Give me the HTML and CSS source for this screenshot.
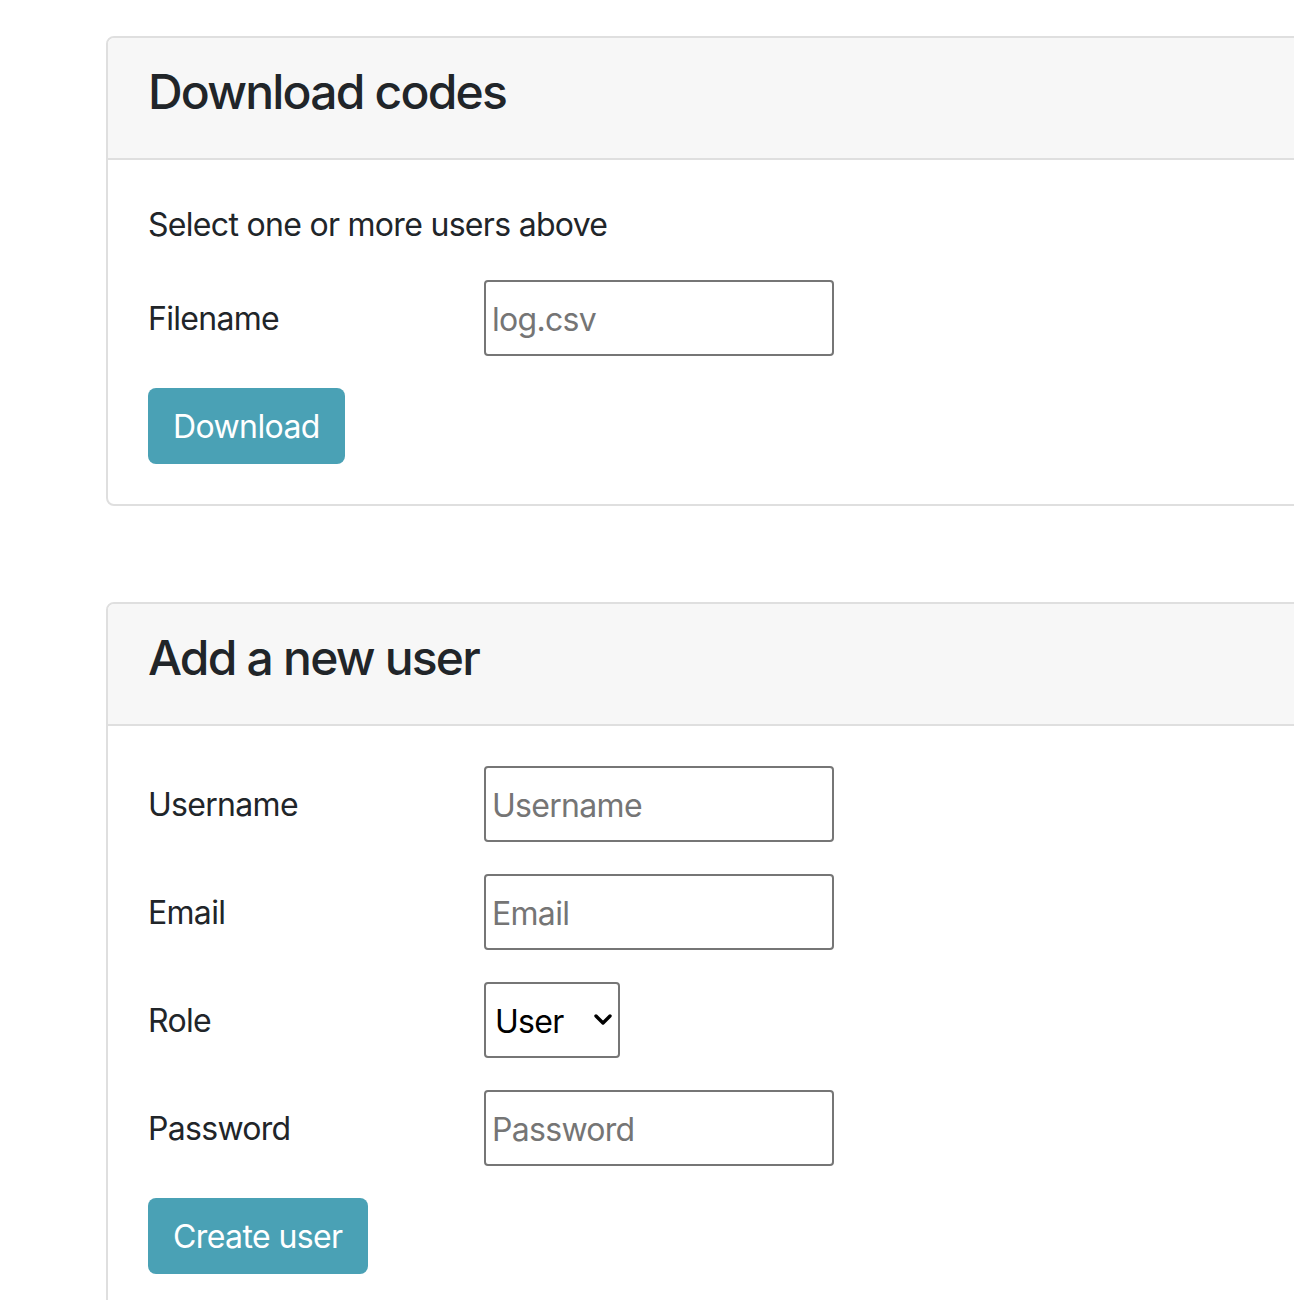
FILE: index.html
```html
<!DOCTYPE html>
<html lang="en">
<head>
<meta charset="utf-8">
<title>Users</title>
<link rel="stylesheet" href="styles.css">
</head>
<body>
<main class="page">
  <section class="card card-download">
    <header class="card-header"><h4 class="card-title">Download codes</h4></header>
    <div class="card-body">
      <p class="hint">Select one or more users above</p>
      <div class="form-row">
        <label class="form-label" for="filename">Filename</label>
        <input class="text-input" id="filename" type="text" placeholder="log.csv">
      </div>
      <button class="btn" type="button">Download</button>
    </div>
  </section>

  <section class="card">
    <header class="card-header"><h4 class="card-title">Add a new user</h4></header>
    <div class="card-body">
      <div class="form-row">
        <label class="form-label" for="username">Username</label>
        <input class="text-input" id="username" type="text" placeholder="Username">
      </div>
      <div class="form-row">
        <label class="form-label" for="email">Email</label>
        <input class="text-input" id="email" type="email" placeholder="Email">
      </div>
      <div class="form-row">
        <label class="form-label" for="role">Role</label>
        <div class="select-wrap">
          <select class="select-input" id="role">
            <option>User</option>
            <option>Admin</option>
          </select>
          <svg class="select-chevron" width="20" height="14" viewBox="0 0 20 14" aria-hidden="true"><path d="M3 3 L10 10 L17 3" fill="none" stroke="#000" stroke-width="3.4" stroke-linecap="round" stroke-linejoin="round"/></svg>
        </div>
      </div>
      <div class="form-row">
        <label class="form-label" for="password">Password</label>
        <input class="text-input" id="password" type="password" placeholder="Password">
      </div>
      <button class="btn" type="button">Create user</button>
    </div>
  </section>
</main>
</body>
</html>
```
FILE: styles.css
```css
html, body {
  margin: 0;
  padding: 0;
  overflow: hidden;
  background: #fff;
}
body {
  font-family: Inter, "Noto Sans", "Liberation Sans", sans-serif;
  font-size: 32px;
  line-height: 48px;
  color: #212529;
  letter-spacing: -0.7px;
}
.page {
  padding: 36px 0 0 106px;
}
.card {
  width: 1300px;
  border: 2px solid #dfdfdf;
  border-radius: 8px;
  background: #fff;
}
.card-download {
  margin-bottom: 96px;
}
.card-header {
  background: #f7f7f7;
  border-bottom: 2px solid #dfdfdf;
  padding: 26px 40px 24px;
  border-radius: 6px 6px 0 0;
}
.card-title {
  margin: 0 0 14px;
  font-size: 48px;
  line-height: 56px;
  font-weight: 500;
  letter-spacing: -1.8px;
}
.card-body {
  padding: 40px;
}
.hint {
  margin: 0 0 31px;
  padding-top: 1px;
}
.form-row {
  display: flex;
  align-items: center;
  margin-bottom: 32px;
}
.form-label {
  width: 336px;
  flex: none;
  padding-top: 2px;
}
.text-input {
  box-sizing: border-box;
  width: 350px;
  height: 76px;
  border: 2px solid #767676;
  border-radius: 4px;
  padding: 2px 6px 0;
  font-family: inherit;
  font-size: 32px;
  letter-spacing: -0.7px;
  color: #212529;
  background: #fff;
  outline: none;
}
.text-input::placeholder {
  color: #757575;
}
.select-wrap {
  position: relative;
  width: 136px;
  height: 76px;
}
.select-input {
  appearance: none;
  -webkit-appearance: none;
  box-sizing: border-box;
  width: 136px;
  height: 76px;
  border: 2px solid #767676;
  border-radius: 4px;
  padding: 2px 0 0 9px;
  font-family: inherit;
  font-size: 32px;
  letter-spacing: -0.7px;
  color: #000;
  background: #fff;
  outline: none;
}
.select-chevron {
  position: absolute;
  right: 7px;
  top: 31px;
  pointer-events: none;
}
.btn {
  display: inline-block;
  height: 76px;
  padding: 2px 25px 0;
  border: none;
  border-radius: 8px;
  background: #4aa1b5;
  color: #fff;
  font-family: inherit;
  font-size: 32px;
  line-height: 48px;
  letter-spacing: -0.6px;
}
```
